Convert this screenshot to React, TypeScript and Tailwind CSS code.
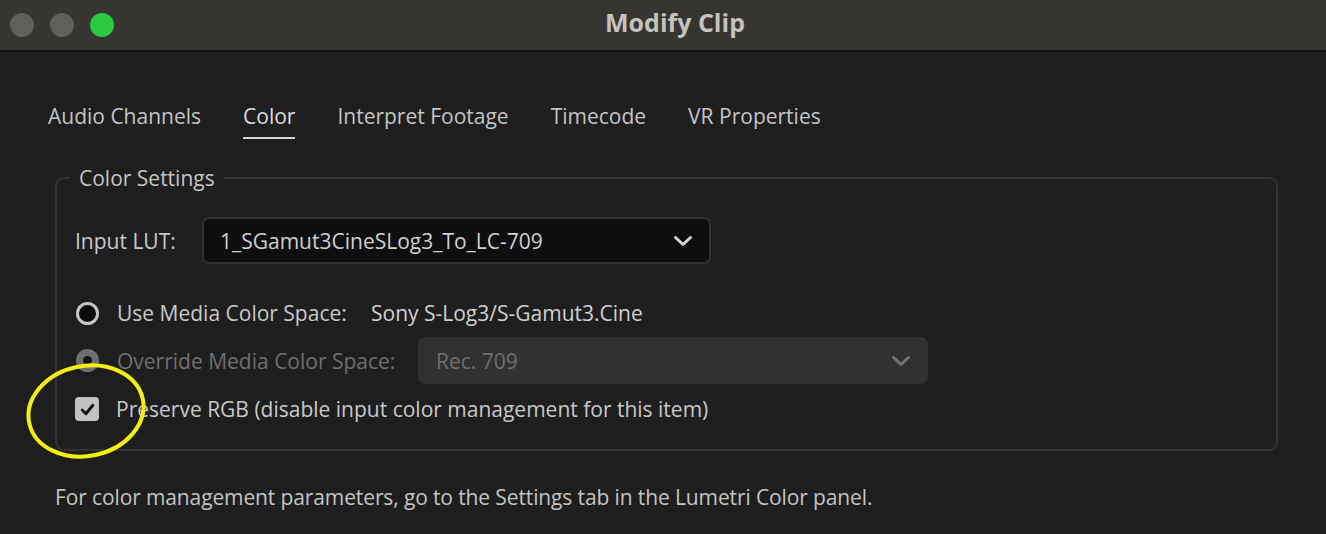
import React from "react";

const tabs = ["Audio Channels", "Color", "Interpret Footage", "Timecode", "VR Properties"];

function Chevron({ className }: { className?: string }) {
  return (
    <svg viewBox="0 0 20 12" className={className} fill="none" stroke="currentColor" strokeWidth={3} strokeLinecap="round" strokeLinejoin="round">
      <path d="M2.5 2.5 L10 9.5 L17.5 2.5" />
    </svg>
  );
}

export default function App() {
  return (
    <div className="w-[1326px] h-[534px] bg-[#1e1e1e] overflow-hidden text-[#c9c9c9] relative" style={{ fontFamily: "'Open Sans', Lato, sans-serif" }}>
      {/* title bar */}
      <div className="h-[52px] bg-[#363531] border-b-2 border-[#121212] flex items-center relative">
        <div className="flex items-center gap-4 pl-[10px]">
          <span className="w-6 h-6 rounded-full bg-[#605f5c]" />
          <span className="w-6 h-6 rounded-full bg-[#605f5c]" />
          <span className="w-6 h-6 rounded-full bg-[#2cc841]" />
        </div>
        <div className="absolute inset-0 flex items-center justify-center pointer-events-none pb-[4px]">
          <span className="text-[25px] font-bold text-[#c4c3bf] pl-[24px]">Modify Clip</span>
        </div>
      </div>

      {/* tabs */}
      <div className="flex gap-[42px] pl-[48px] pt-[49px] text-[21px] leading-[30px]">
        {tabs.map((t) => (
          <div key={t} className="flex flex-col">
            <span className={t === "Color" ? "text-[#dcdcdc]" : "text-[#c4c4c4]"}>{t}</span>
            <span className={t === "Color" ? "h-[2px] mt-[6px] bg-[#d8d8d8]" : "h-[2px] mt-[6px]"} />
          </div>
        ))}
      </div>

      {/* fieldset */}
      <fieldset className="ml-[55px] mr-[48px] mt-[24px] border-2 border-[#323232] rounded-[9px] pl-[18px] pr-4 pb-[26px] text-[21px] leading-[28px]">
        <legend className="px-[9px] -ml-[5px] leading-[30px] text-[#c4c4c4]">Color Settings</legend>

        <div className="flex items-center mt-[24px]">
          <span className="w-[127px]">Input LUT:</span>
          <div className="w-[509px] h-[47px] bg-[#0e0e0e] border-2 border-[#303030] rounded-[7px] flex items-center justify-between pl-[16px] pr-[16px]">
            <span className="text-[#d0d0d0]">1_SGamut3CineSLog3_To_LC-709</span>
            <Chevron className="w-[20px] h-[12px] text-[#d4d4d4]" />
          </div>
        </div>

        <div className="flex items-center mt-[36px] h-[26px]">
          <span className="w-[23px] h-[23px] rounded-full border-[3px] border-[#c6c6c6] bg-[#0c0c0c] ml-[1px]" />
          <span className="ml-[18px] w-[254px]">Use Media Color Space:</span>
          <span className="text-[#d0d0d0]">Sony S-Log3/S-Gamut3.Cine</span>
        </div>

        <div className="flex items-center mt-[11px]">
          <span className="w-[23px] h-[23px] rounded-full bg-[#6e6e6e] flex items-center justify-center ml-[1px]">
            <span className="w-[9px] h-[9px] rounded-full bg-[#141414]" />
          </span>
          <span className="ml-[18px] w-[301px] text-[#6f6f6f]">Override Media Color Space:</span>
          <div className="w-[510px] h-[47px] bg-[#313131] rounded-[7px] flex items-center justify-between pl-[18px] pr-[17px]">
            <span className="text-[#6e6e6e]">Rec. 709</span>
            <Chevron className="w-[20px] h-[12px] text-[#727272]" />
          </div>
        </div>

        <div className="flex items-center mt-[11px]">
          <span className="w-[24px] h-[24px] rounded-[4px] bg-[#c2c2c2] flex items-center justify-center">
            <svg viewBox="0 0 16 16" className="w-[17px] h-[17px]" fill="none" stroke="#141414" strokeWidth={2.8} strokeLinecap="round" strokeLinejoin="round">
              <path d="M3 8.5 L6.5 12 L13 4" />
            </svg>
          </span>
          <span className="ml-[17px]">Preserve RGB (disable input color management for this item)</span>
        </div>
      </fieldset>

      <p className="ml-[55px] mt-[32px] text-[21px] leading-[28px] tracking-[-0.12px] text-[#c4c4c4]">For color management parameters, go to the Settings tab in the Lumetri Color panel.</p>

      {/* yellow annotation ring */}
      <svg className="absolute left-[20px] top-[358px] pointer-events-none" width="135" height="106" viewBox="0 0 135 106">
        <ellipse cx="66" cy="53" rx="58" ry="45" fill="none" stroke="#f4ee12" strokeWidth="4" transform="rotate(-12 66 53)" />
      </svg>
    </div>
  );
}
